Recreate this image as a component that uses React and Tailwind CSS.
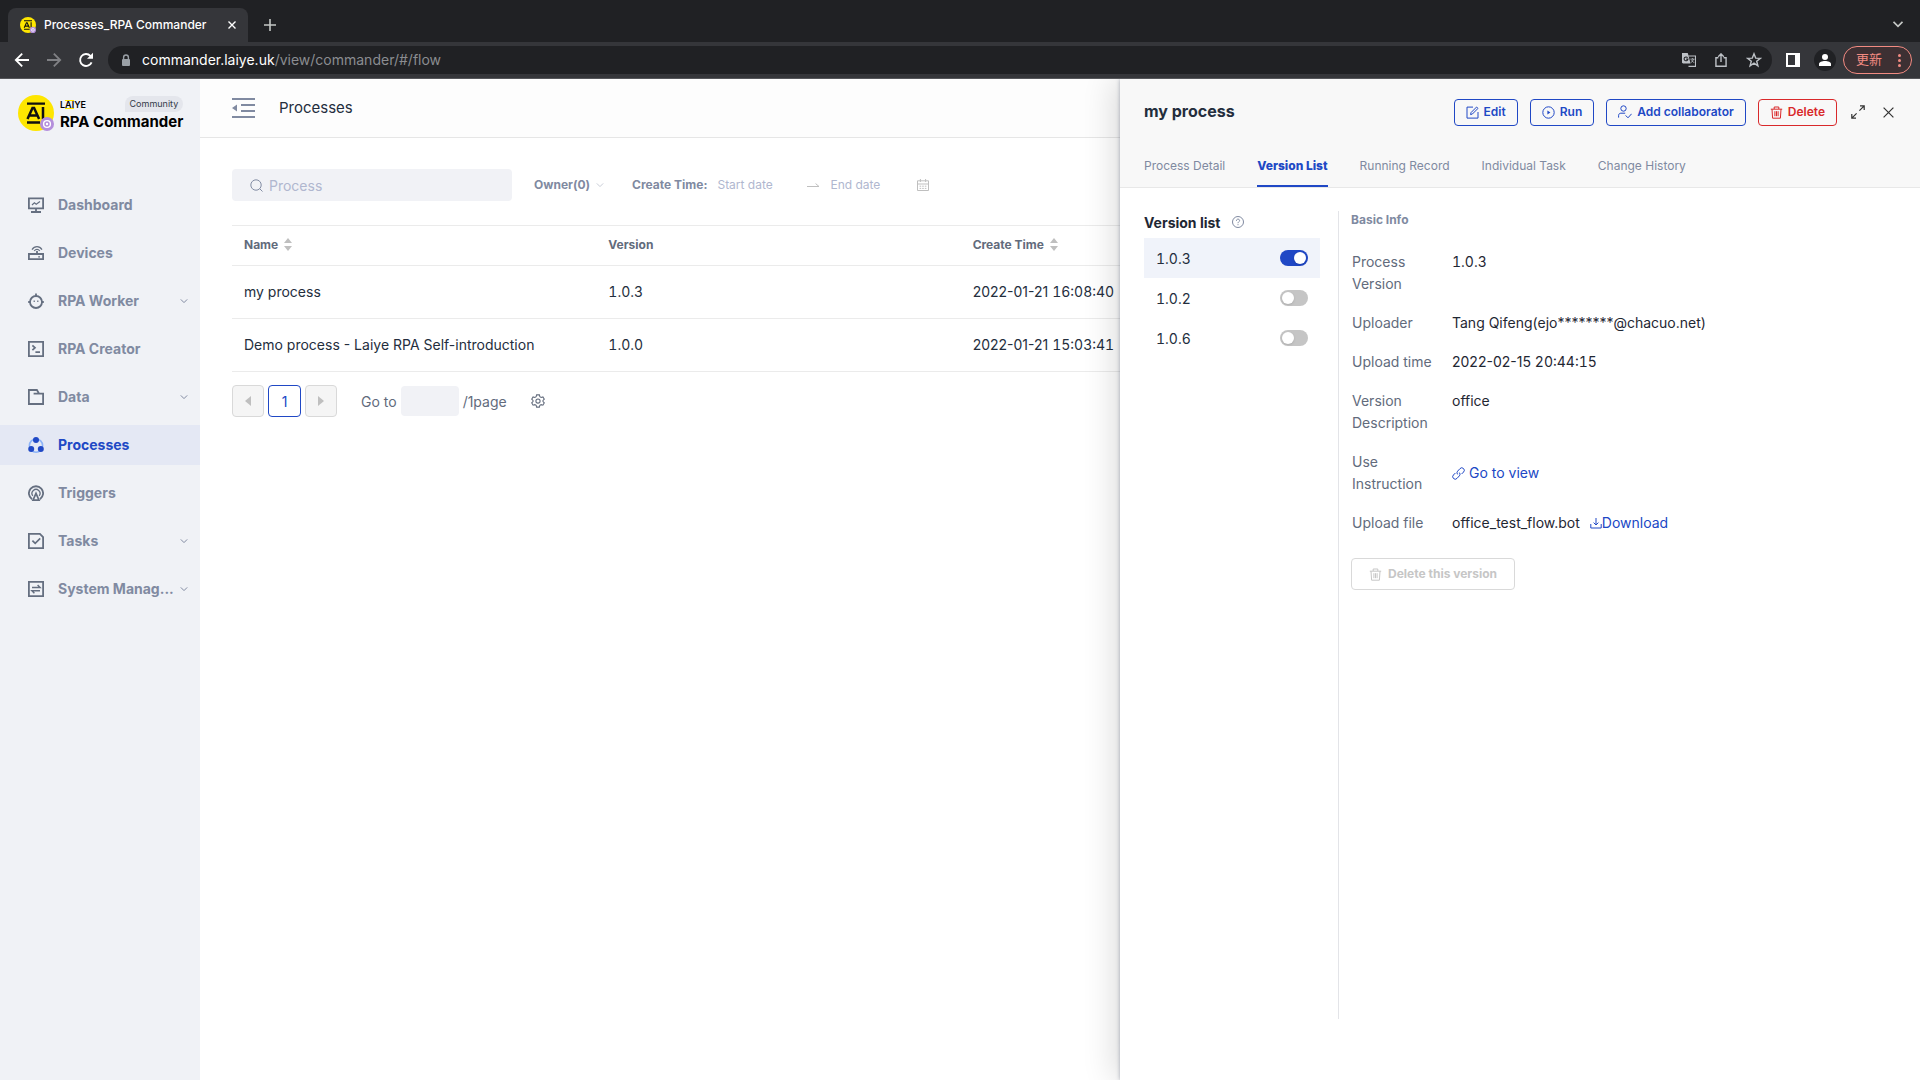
import React, { useState } from 'react';

const Svg = ({ size = 16, box = 16, className = '', children }) => (
  <svg width={size} height={size} viewBox={`0 0 ${box} ${box}`} fill="none" stroke="currentColor" strokeWidth="1" className={`shrink-0 ${className}`} aria-hidden="true">
    {children}
  </svg>
);

const Chevron = ({ className }) => (
  <Svg size={8} box={8} className={className}>
    <path d="M.8 2.4 4 5.6l3.2-3.2" />
  </Svg>
);

const Trash = ({ size = 13 }) => (
  <Svg size={size} box={13}>
    <path d="M.8 3.2h11.4M4.2 3V1h4.6v2M2 3.2l.6 9h7.8l.6-9M4.9 5.2v5M6.5 5.2v5M8.1 5.2v5" />
  </Svg>
);

const Sorter = () => (
  <svg width="8" height="13" viewBox="0 0 8 13" fill="#bfbfbf" aria-hidden="true">
    <path d="M4 0l4 5H0zM4 13l4-5H0z" />
  </svg>
);

const Logo = ({ size }) => (
  <svg width={size} height={size} viewBox="0 0 36 36" fill="none" className="shrink-0" aria-hidden="true">
    <circle cx="18" cy="18" r="18" fill="#fee600" />
    <path d="M9 8.6h18M9 27.5h13" stroke="#111" strokeWidth="2.4" />
    <path d="M9.5 24 14.5 13h1.6l5 11M11.5 20.6h7.5M25 12v12" stroke="#111" strokeWidth="2.5" />
    <circle cx="29" cy="29" r="7" fill="#b48fdc" />
    <circle cx="29" cy="29" r="3.4" stroke="#fff" strokeWidth="1.4" />
    <circle cx="29" cy="29" r="1.2" fill="#fff" />
  </svg>
);

const Timestamp = ({ date, time }) => (
  <span>
    {date} <span className="tabular-nums">{time}</span>
  </span>
);

const navItems = [
  {
    label: 'Dashboard',
    icon: (
      <>
        <path d="M.9 1.4h14.2v10H.9zM8 11.4v3.4M3 15h10" strokeWidth="1.8" />
        <path d="M4 8l2.4-2.2 1.8 1.4L12 4.4" strokeWidth="1.2" />
      </>
    ),
  },
  {
    label: 'Devices',
    icon: (
      <>
        <path d="M.9 9h14.2v5.2H.9zM9 6v3" strokeWidth="1.8" />
        <path d="M10.2 11.8h1.8M4 4.6c2.6-4 7.4-4 10 0M6.2 6c1.6-2.2 4-2.2 5.6 0" strokeWidth="1.2" />
      </>
    ),
  },
  {
    label: 'RPA Worker',
    expandable: true,
    icon: (
      <>
        <circle cx="8" cy="9" r="6" strokeWidth="1.8" />
        <path d="M8 .6V3M.2 9H2M14 9h1.8" strokeWidth="1.8" />
        <path d="M6.2 7.4V9M9.8 7.4V9" strokeWidth="1.2" />
      </>
    ),
  },
  {
    label: 'RPA Creator',
    icon: (
      <>
        <path d="M.9.9h14.2v14.2H.9z" strokeWidth="1.8" />
        <path d="M4.4 4.4 7 6.8 4.4 9.2M7.4 11.2H12" strokeWidth="1.7" />
      </>
    ),
  },
  {
    label: 'Data',
    expandable: true,
    icon: <path d="M.9 15V1h8l2.2 3.6h4V15zM5.6 4.6h6" strokeWidth="1.8" />,
  },
  {
    label: 'Processes',
    icon: (
      <>
        <circle cx="8" cy="8.6" r="6.6" stroke="#8db4f8" strokeWidth="1.6" />
        <circle cx="8" cy="3" r="3" fill="currentColor" stroke="none" />
        <circle cx="3.2" cy="12" r="3" fill="currentColor" stroke="none" />
        <circle cx="12.8" cy="12" r="3" fill="currentColor" stroke="none" />
      </>
    ),
  },
  {
    label: 'Triggers',
    icon: (
      <>
        <path d="M4 14.2a7.1 7.1 0 1 1 8 0" strokeWidth="1.8" />
        <path d="M4.8 10.8a4 4 0 1 1 6.4 0" strokeWidth="1.3" />
        <path d="M8 8.4 5 15.1h6z" strokeWidth="1.7" />
      </>
    ),
  },
  {
    label: 'Tasks',
    expandable: true,
    icon: (
      <>
        <path d="M.9.9h11l3.2 3.2v11H.9z" strokeWidth="1.8" />
        <path d="M4.4 7.6 7.2 10.4l5-5" strokeWidth="1.7" />
      </>
    ),
  },
  {
    label: 'System Manag...',
    expandable: true,
    icon: (
      <>
        <path d="M.9.9h14.2v14.2H.9z" strokeWidth="1.8" />
        <path d="M4 6.4h8L9.6 4M12 9.8H4l2.4 2.4" strokeWidth="1.5" />
      </>
    ),
  },
];

const processes = [
  { name: 'my process', version: '1.0.3', date: '2022-01-21', time: '16:08:40' },
  { name: 'Demo process - Laiye RPA Self-introduction', version: '1.0.0', date: '2022-01-21', time: '15:03:41' },
];

const tabs = ['Process Detail', 'Version List', 'Running Record', 'Individual Task', 'Change History'];

const BrowserBar = () => (
  <header className="bg-[#202124] text-white">
    <div className="flex h-[42px] items-end pl-2 pr-4">
      <div className="flex h-[34px] w-60 items-center rounded-t-lg bg-[#35363a] pl-3 pr-2">
        <Logo size={16} />
        <span className="ml-2 flex-1 text-[12px] font-medium">Processes_RPA Commander</span>
        <button type="button" aria-label="Close tab" className="flex h-4 w-4 items-center justify-center">
          <Svg size={8} box={8}><path d="M.5.5l7 7M7.5.5l-7 7" strokeWidth="1.4" /></Svg>
        </button>
      </div>
      <button type="button" aria-label="New tab" className="mb-[11px] ml-4 text-[#c4c7c5]">
        <Svg size={12} box={12}><path d="M6 0v12M0 6h12" strokeWidth="1.6" /></Svg>
      </button>
      <button type="button" aria-label="Search tabs" className="mb-3 ml-auto flex h-3 w-3 items-center justify-center text-[#c4c7c5]">
        <Svg size={10} box={8}><path d="M.4 2.2 4 5.8l3.6-3.6" strokeWidth="1.4" /></Svg>
      </button>
    </div>
    <div className="flex h-[37px] items-center border-b border-[#55565a] bg-[#35363a] pl-3 pr-2">
      <button type="button" aria-label="Back" className="flex w-5 justify-center">
        <Svg size={16}><path d="M15 8H2M8.2 1.6 1.8 8l6.4 6.4" strokeWidth="1.8" /></Svg>
      </button>
      <button type="button" aria-label="Forward" className="ml-3 flex w-5 justify-center text-[#808185]">
        <Svg size={16}><path d="M1 8h13M7.8 1.6 14.2 8l-6.4 6.4" strokeWidth="1.8" /></Svg>
      </button>
      <button type="button" aria-label="Reload" className="ml-3 flex w-5 justify-center">
        <Svg size={16}>
          <path d="M13.6 10.4A6 6 0 1 1 12.4 3.8L14 5.6" strokeWidth="1.9" />
          <path d="M15 .8v6H9z" fill="currentColor" stroke="none" />
        </Svg>
      </button>
      <div className="ml-3 flex h-7 flex-1 items-center rounded-full bg-[#202124] pl-3 pr-2.5">
        <svg width="12" height="13" viewBox="0 0 12 13" fill="none" aria-hidden="true">
          <rect x="2" y="5" width="8" height="7" rx="1" fill="#9aa0a6" />
          <path d="M3.6 5V3.4a2.4 2.4 0 0 1 4.8 0V5" stroke="#9aa0a6" strokeWidth="1.4" />
        </svg>
        <p className="ml-2.5 pb-px text-[14px] leading-5 text-[#8b8d91]"><span className="text-white">commander.laiye.uk</span>/view/commander/#/flow</p>
        <div className="ml-auto flex items-center gap-[18px] text-[#bdc1c6]">
          <button type="button" aria-label="Translate">
            <Svg size={14}>
              <path d="M7 3.5h8.4v11.8H7.4" strokeWidth="1.2" />
              <path d="M0 0h6.6l3.2 12H1.2L0 11z" fill="currentColor" stroke="none" />
              <path d="M6.4 5.4a2.2 2.2 0 1 0 .4 1.6H4.8" stroke="#202124" strokeWidth="1.2" />
              <path d="M9.6 7h4.8M12 6v1M13.4 7.2 10.6 11M11 8.4l2.8 2.8" />
            </Svg>
          </button>
          <button type="button" aria-label="Share">
            <Svg size={14}><path d="M5 5.4H2.2v9.8h11.6V5.4H11M8 10.4V1.4M4.8 4.2 8 1l3.2 3.2" strokeWidth="1.6" /></Svg>
          </button>
          <button type="button" aria-label="Bookmark">
            <Svg size={16}><path d="M8 1.8l1.7 4.3 4.6.3-3.6 2.9 1.2 4.5L8 11.2l-3.9 2.6 1.2-4.5L1.7 6.4l4.6-.3z" strokeWidth="1.4" /></Svg>
          </button>
        </div>
      </div>
      <button type="button" aria-label="Side panel" className="ml-3.5">
        <svg width="14" height="14" viewBox="0 0 14 14" fill="#fff" aria-hidden="true"><path fillRule="evenodd" d="M0 0h14v14H0zM2 2v10h7V2z" /></svg>
      </button>
      <button type="button" aria-label="Profile" className="ml-3.5 flex h-[22px] w-[22px] items-center justify-center rounded-full bg-[#202124]">
        <svg width="12" height="12" viewBox="0 0 12 12" fill="#fff" aria-hidden="true"><circle cx="6" cy="3" r="3" /><path d="M0 12v-2c0-4 12-4 12 0v2z" /></svg>
      </button>
      <button type="button" className="ml-[7px] flex h-7 items-center gap-4 rounded-full border border-[#f28b82] bg-[#3d3033] pl-3 pr-2.5 text-[13px] text-[#f28b82]">
        更新
        <svg width="3" height="13" viewBox="0 0 3 13" fill="currentColor" aria-hidden="true"><circle cx="1.5" cy="1.5" r="1.5" /><circle cx="1.5" cy="6.5" r="1.5" /><circle cx="1.5" cy="11.5" r="1.5" /></svg>
      </button>
    </div>
  </header>
);

const Sidebar = () => (
  <aside className="w-[200px] shrink-0 bg-[#f0f2f6]">
    <div className="flex h-[106px] items-start gap-1.5 pl-[18px] pt-4">
      <Logo size={36} />
      <div className="flex flex-col whitespace-nowrap text-black">
        <div className="flex h-[17px] items-center justify-between">
          <span className="mt-0.5 flex text-[9px] leading-[9px] font-semibold">
            L<span className="border-y border-[#fee600] leading-[7px]">AI</span>YE
          </span>
          <span className="rounded-full rounded-bl-none bg-[#e4e6ec] px-[5px] text-[9px] leading-4 text-[#333a48]">Community</span>
        </div>
        <span className="text-[15px] leading-5 font-bold">RPA Commander</span>
      </div>
    </div>
    <nav className="flex flex-col gap-2">
      {navItems.map((item) => {
        const active = item.label === 'Processes';
        return (
          <a
            key={item.label}
            href="#/flow"
            className={`flex h-10 items-center pl-7 pr-3 text-[14px] leading-5 font-bold ${active ? 'bg-[#e4e8f4] text-[#2048c5]' : 'text-[#808aa1]'}`}
          >
            <Svg className={active ? '' : 'text-[#656f80]'}>{item.icon}</Svg>
            <span className="ml-3.5 flex-1 whitespace-nowrap">{item.label}</span>
            {item.expandable && <Chevron className="text-[#808aa1]" />}
          </a>
        );
      })}
    </nav>
  </aside>
);

const Filters = () => (
  <div className="flex h-8 items-center text-[12px]">
    <label className="flex h-8 w-[280px] items-center gap-1.5 rounded bg-[#f1f2f6] pl-[18px] text-[#808aa1]">
      <Svg size={13}>
        <circle cx="7.4" cy="7.4" r="6.4" strokeWidth="1.2" />
        <path d="M12 12l3.4 3.4" strokeWidth="1.2" />
      </Svg>
      <input type="text" aria-label="Process" placeholder="Process" className="w-full bg-transparent text-[14px] outline-none placeholder:text-[#b0b7cf]" />
    </label>
    <button type="button" className="ml-[22px] flex items-center gap-1.5 font-bold text-[#808aa1]">
      Owner(0)
      <Chevron className="text-[#c8ccd6]" />
    </button>
    <label htmlFor="start-date" className="ml-7 font-bold text-[#808aa1]">Create Time:</label>
    <input id="start-date" type="text" placeholder="Start date" className="ml-2.5 w-[90px] outline-none placeholder:text-[#b0b7cf]" />
    <Svg size={12} box={12} className="text-[#bfbfbf]"><path d="M0 7.5h12L8.6 4.6" /></Svg>
    <input type="text" aria-label="End date" placeholder="End date" className="ml-[11px] w-[87px] outline-none placeholder:text-[#b0b7cf]" />
    <Svg size={12} box={12} className="text-[#bfbfbf]">
      <path d="M.5 1.8h11v9.7H.5zM.5 5h11M3.4 0v3M8.6 0v3M2.6 7.2h1.6M5.2 7.2h1.6M7.8 7.2h1.6M2.6 9.4h1.6M5.2 9.4h1.6M7.8 9.4h1.6" />
    </Svg>
  </div>
);

const ProcessTable = () => (
  <table className="mt-6 w-full table-fixed border-t border-[#ebebeb] text-left">
    <colgroup>
      <col className="w-[22%]" />
      <col className="w-[22%]" />
      <col />
    </colgroup>
    <thead>
      <tr className="h-10 border-b border-[#ebebeb] text-[12px] text-[#626b7c]">
        <th className="px-3 pb-0.5 font-bold"><span className="flex items-center gap-1.5">Name <Sorter /></span></th>
        <th className="px-3 pb-0.5 font-bold">Version</th>
        <th className="px-3 pb-0.5 font-bold"><span className="flex items-center gap-1.5">Create Time <Sorter /></span></th>
      </tr>
    </thead>
    <tbody>
      {processes.map((p) => (
        <tr key={p.name} className="h-[53px] border-b border-[#ebebeb] text-[14px] whitespace-nowrap text-[#242e3d]">
          <td className="px-3 pb-0.5">{p.name}</td>
          <td className="px-3 pb-0.5 tabular-nums">{p.version}</td>
          <td className="px-3 pb-0.5"><Timestamp date={p.date} time={p.time} /></td>
        </tr>
      ))}
    </tbody>
  </table>
);

const Pagination = () => (
  <div className="mt-[13px] flex items-center text-[14px] text-[#626b7c]">
    <button type="button" aria-label="Previous page" className="flex h-8 w-8 items-center justify-center rounded border border-[#d9d9d9] bg-[#f5f5f5]">
      <svg width="6" height="10" viewBox="0 0 6 10" fill="#bfbfbf" aria-hidden="true"><path d="M6 0v10L0 5z" /></svg>
    </button>
    <button type="button" className="ml-1 h-8 w-[33px] rounded border border-[#2048c5] text-[#2048c5]">1</button>
    <button type="button" aria-label="Next page" className="ml-1 flex h-8 w-8 items-center justify-center rounded border border-[#d9d9d9] bg-[#f5f5f5]">
      <svg width="6" height="10" viewBox="0 0 6 10" fill="#bfbfbf" aria-hidden="true"><path d="M0 0v10l6-5z" /></svg>
    </button>
    <label htmlFor="goto-page" className="ml-6">Go to</label>
    <input id="goto-page" type="text" className="mx-1 h-[30px] w-[58px] rounded bg-[#f1f2f6] px-2 outline-none" />
    <span>/1page</span>
    <button type="button" aria-label="Page settings" className="ml-6">
      <Svg size={14} className="text-[#626b7c]">
        <path d="M6.4 1h3.2l.5 2 1.5.9 2-.6 1.6 2.7-1.5 1.4v1.3l1.5 1.4-1.6 2.7-2-.6-1.5.8-.5 2H6.4l-.5-2-1.5-.8-2 .6L.8 10.1l1.5-1.4V7.4L.8 6l1.6-2.7 2 .6L5.9 3z" strokeWidth="1.2" />
        <circle cx="8" cy="8" r="2.4" strokeWidth="1.2" />
      </Svg>
    </button>
  </div>
);

const ActionButton = ({ icon, label, danger }) => (
  <button
    type="button"
    className={`flex h-[27px] items-center gap-[5px] rounded border px-[11px] text-[12px] font-semibold whitespace-nowrap ${danger ? 'border-[#d9292b] text-[#d9292b]' : 'border-[#2048c5] text-[#2048c5]'}`}
  >
    {icon}
    {label}
  </button>
);

const VersionList = () => {
  const [enabled, setEnabled] = useState('1.0.3');
  return (
    <section className="w-[200px] shrink-0 pl-6">
      <h3 className="mb-[5px] flex h-[22px] items-center text-[14px] font-bold text-[#1f2733]">
        Version list
        <Svg size={12} box={12} className="ml-3 text-[#808aa1]">
          <circle cx="6" cy="6" r="5.5" />
          <path d="M4.4 4.8c0-2.2 3.2-2.2 3.2-.2C7.6 5.8 6 5.7 6 7.2M6 8.2v1" />
        </Svg>
      </h3>
      <ul>
        {['1.0.3', '1.0.2', '1.0.6'].map((v) => (
          <li key={v}>
            <label className={`flex h-10 items-center justify-between px-3 text-[14px] tabular-nums text-[#242e3d] ${v === '1.0.3' ? 'bg-[#f0f3fa]' : ''}`}>
              {v}
              <input type="checkbox" role="switch" className="peer sr-only" checked={enabled === v} onChange={() => setEnabled(v)} />
              <span className="flex h-4 w-7 rounded-full bg-[#c5c5c5] p-0.5 peer-checked:justify-end peer-checked:bg-[#2048c5]">
                <span className="h-3 w-3 rounded-full bg-white shadow-sm" />
              </span>
            </label>
          </li>
        ))}
      </ul>
    </section>
  );
};

const DetailRow = ({ label, middle, children }) => (
  <div className={`flex text-[14px] leading-[22px] ${middle ? 'items-center' : 'items-start'}`}>
    <dt className="w-20 shrink-0 text-[#626b7c]">{label}</dt>
    <dd className="ml-5 flex items-center whitespace-nowrap text-[#1f2733]">{children}</dd>
  </div>
);

const BasicInfo = () => (
  <section className="min-w-0 flex-1 border-l border-[#e3e4e8] pl-3">
    <h3 className="text-[12px] leading-[18px] font-bold text-[#808aa1]">Basic Info</h3>
    <dl className="mt-[22px] flex flex-col gap-[17px] pl-px">
      <DetailRow label="Process Version"><span className="tabular-nums">1.0.3</span></DetailRow>
      <DetailRow label="Uploader">Tang Qifeng(ejo********@chacuo.net)</DetailRow>
      <DetailRow label="Upload time"><Timestamp date="2022-02-15" time="20:44:15" /></DetailRow>
      <DetailRow label="Version Description">office</DetailRow>
      <DetailRow label="Use Instruction" middle>
        <a href="#/flow" className="flex items-center gap-1 text-[#2048c5]">
          <Svg size={13} box={13}>
            <path d="M5.6 7.4a2.4 2.4 0 0 1 0-3.2l2.4-2.6a2.4 2.4 0 0 1 3.6 3.4L9.6 7M7.4 5.6a2.4 2.4 0 0 1 0 3.2L5 11.4A2.4 2.4 0 0 1 1.4 8l2-2" />
          </Svg>
          Go to view
        </a>
      </DetailRow>
      <DetailRow label="Upload file">
        office_test_flow.bot
        <a href="#/flow" className="ml-2.5 flex items-center text-[#2048c5]">
          <Svg size={12} box={12}>
            <path d="M6 1v7M3.6 5.6 6 8l2.4-2.4M.8 7v4h10.4V7" />
          </Svg>
          Download
        </a>
      </DetailRow>
    </dl>
    <button type="button" disabled className="mt-6 flex h-8 items-center gap-1.5 rounded border border-[#d9d9d9] px-[17px] text-[12px] font-bold text-[#c6c6c6]">
      <Trash />
      Delete this version
    </button>
  </section>
);

const ProcessDrawer = () => {
  const [tab, setTab] = useState('Version List');
  return (
    <aside className="absolute inset-y-0 right-0 flex w-[800px] flex-col bg-white shadow-[-6px_0_30px_rgba(0,0,0,0.14),0_0_4px_rgba(60,70,100,0.4)]">
      <div className="border-b border-[#e8e8e8] bg-[#f8f8f8] px-6">
        <div className="flex h-[66px] items-center">
          <h2 className="pb-0.5 text-[16px] font-bold text-[#242e3d]">my process</h2>
          <div className="ml-auto flex items-center gap-3">
            <ActionButton label="Edit" icon={<Svg size={13} box={13}><path d="M7 1.1H1v11h11V6M4.6 8.6 5 6.6 10.6 1l1.4 1.4-5.6 5.6z" /></Svg>} />
            <ActionButton label="Run" icon={<Svg size={13} box={13}><circle cx="6.5" cy="6.5" r="5.7" /><path d="M5.4 4.4v4.2l3-2.1z" fill="currentColor" stroke="none" /></Svg>} />
            <ActionButton label="Add collaborator" icon={<Svg size={14} box={14}><circle cx="5.5" cy="3.5" r="2.7" /><path d="M.6 12.6V10.4c0-1.2.9-2.2 2.2-2.2h4.4M7.6 10.4l2.4 2.4 3.6-4" /></Svg>} />
            <ActionButton danger label="Delete" icon={<Trash />} />
            <button type="button" aria-label="Expand" className="ml-0.5 text-[#333]">
              <Svg size={14} box={14}><path d="M9 .8h4.2V5M13.2.8 8.4 5.6M5 13.2H.8V9M.8 13.2l4.8-4.8" strokeWidth="1.2" /></Svg>
            </button>
            <button type="button" aria-label="Close" className="ml-1.5 mr-0.5 text-[#333]">
              <Svg size={11} box={11}><path d="M.6.6l9.8 9.8M10.4.6.6 10.4" strokeWidth="1.2" /></Svg>
            </button>
          </div>
        </div>
        <div role="tablist" className="flex h-[42px] gap-8 text-[12px]">
          {tabs.map((t) => (
            <button
              key={t}
              type="button"
              role="tab"
              aria-selected={tab === t}
              onClick={() => setTab(t)}
              className={`border-b-2 pt-0.5 ${tab === t ? 'border-[#2048c5] font-extrabold text-[#2048c5]' : 'border-transparent text-[#808aa1]'}`}
            >
              {t}
            </button>
          ))}
        </div>
      </div>
      <div className="mb-[61px] mt-[23px] flex flex-1 gap-[18px]">
        <VersionList />
        <BasicInfo />
      </div>
    </aside>
  );
};

export default function App() {
  return (
    <div className="flex min-h-screen flex-col bg-white font-['Inter','Noto_Sans_CJK_SC',sans-serif]">
      <BrowserBar />
      <div className="relative flex flex-1 overflow-hidden">
        <Sidebar />
        <main className="min-w-0 flex-1">
          <div className="flex h-[59px] items-center border-b border-[#e6e6e6] bg-[#fdfdfd] pl-8">
            <button type="button" aria-label="Collapse menu" className="text-[#808aa1]">
              <svg width="23" height="20" viewBox="0 0 23 20" fill="none" stroke="currentColor" strokeWidth="2" aria-hidden="true">
                <path d="M0 1h23M9 7h14M9 13h14M0 19h23" />
                <path d="M0 10l5-3.5v7z" fill="currentColor" stroke="none" />
              </svg>
            </button>
            <h1 className="ml-6 text-[15px] text-[#242e3d]">Processes</h1>
          </div>
          <div className="px-8 pt-[31px]">
            <Filters />
            <ProcessTable />
            <Pagination />
          </div>
        </main>
        <ProcessDrawer />
      </div>
    </div>
  );
}
